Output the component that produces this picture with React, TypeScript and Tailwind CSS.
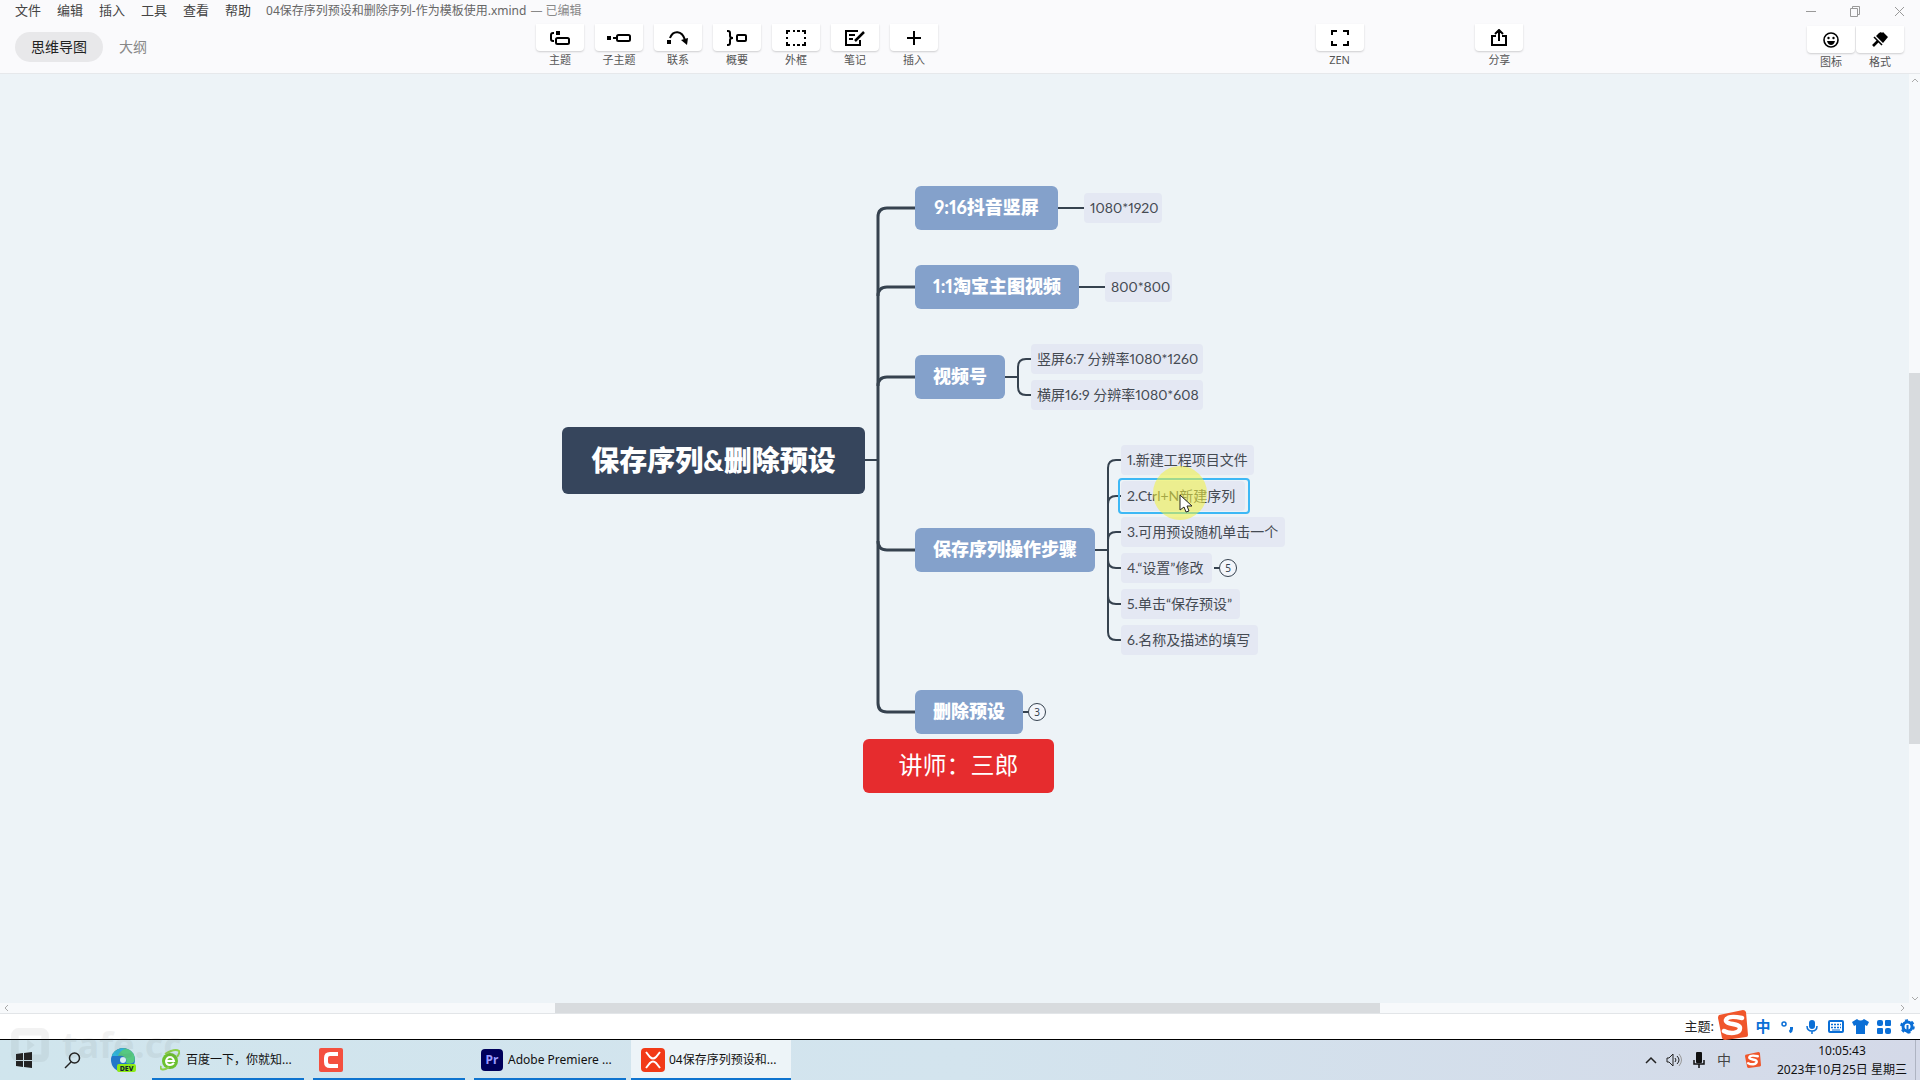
import { ReactNode } from "react";

type Tool = { label: string; icon: ReactNode };
type Node = { text: string; place: string };

const menus = ["文件", "编辑", "插入", "工具", "查看", "帮助"];

const tools: Tool[] = [
    {
        label: "主题",
        icon: (
            <svg width="22" height="16" viewBox="0 0 22 16" fill="none" stroke="#000" strokeWidth="2">
                <path d="M5 3H4Q2 3 2 5v4q0 2 2 2h1" />
                <rect x="7" y="1" width="4" height="4" fill="#000" stroke="none" />
                <rect x="7" y="8" width="13" height="6" rx="1.5" />
            </svg>
        ),
    },
    {
        label: "子主题",
        icon: (
            <svg width="24" height="16" viewBox="0 0 24 16" fill="none" stroke="#000" strokeWidth="2">
                <rect x="0" y="6" width="4" height="4" fill="#000" stroke="none" />
                <path d="M6 8h3" />
                <rect x="10" y="5" width="13" height="6" rx="1.5" />
            </svg>
        ),
    },
    {
        label: "联系",
        icon: (
            <svg width="22" height="16" viewBox="0 0 22 16" fill="none" stroke="#000" strokeWidth="2">
                <rect x="0" y="10" width="4" height="4" fill="#000" stroke="none" />
                <path d="M3 8C6 0 15 0 18 10" />
                <path d="M14 10l7-2-1 7z" fill="#000" stroke="none" />
            </svg>
        ),
    },
    {
        label: "概要",
        icon: (
            <svg width="22" height="16" viewBox="0 0 22 16" fill="none" stroke="#000" strokeWidth="2">
                <path d="M1 1h1q2 0 2 2v3q0 2 3 2q-3 0-3 2v3q0 2-2 2H1" />
                <rect x="11" y="5" width="9" height="6" rx="1" />
            </svg>
        ),
    },
    {
        label: "外框",
        icon: (
            <svg width="22" height="18" viewBox="0 0 22 18" fill="none" stroke="#000" strokeWidth="2">
                <path d="M2 5V2h3M17 2h3v3M20 13v3h-3M5 16H2v-3M8 2h2M12 2h3M8 16h2M12 16h3M2 8v2M20 8v2" />
            </svg>
        ),
    },
    {
        label: "笔记",
        icon: (
            <svg width="22" height="18" viewBox="0 0 22 18" fill="none" stroke="#000" strokeWidth="2">
                <path d="M14 2H2v14h14v-5" />
                <path d="M5 6h6M5 10h4" />
                <path d="M11 12l9-9" strokeWidth="2.5" />
            </svg>
        ),
    },
    {
        label: "插入",
        icon: (
            <svg width="16" height="16" viewBox="0 0 16 16" fill="none" stroke="#000" strokeWidth="2">
                <path d="M8 1v14M1 8h14" />
            </svg>
        ),
    },
];

const zen: Tool = {
    label: "ZEN",
    icon: (
        <svg width="20" height="18" viewBox="0 0 20 18" fill="none" stroke="#000" strokeWidth="2">
            <path d="M2 6V2h5M13 2h5v4M18 12v4h-5M7 16H2v-4" />
        </svg>
    ),
};

const share: Tool = {
    label: "分享",
    icon: (
        <svg width="18" height="18" viewBox="0 0 18 18" fill="none" stroke="#000" strokeWidth="2">
            <path d="M6 7H2v9h14V7h-4M9 12V2M5 5l4-4 4 4" />
        </svg>
    ),
};

const panels: Tool[] = [
    {
        label: "图标",
        icon: (
            <svg width="18" height="18" viewBox="0 0 18 18" fill="none" stroke="#000" strokeWidth="1.6">
                <circle cx="9" cy="9" r="7" />
                <circle cx="6.5" cy="7" r="1.2" fill="#000" stroke="none" />
                <circle cx="11.5" cy="7" r="1.2" fill="#000" stroke="none" />
                <path d="M5 10h8q-1 4-4 4t-4-4z" fill="#000" stroke="none" />
            </svg>
        ),
    },
    {
        label: "格式",
        icon: (
            <svg width="18" height="18" viewBox="0 0 18 18">
                <path d="M8 2l2-1 1 1 1-1 5 5-5 6-7-7z" />
                <path d="M3 6l8 8" stroke="#000" strokeWidth="1.6" />
                <path d="M7 10l-5 5" stroke="#000" strokeWidth="2.6" />
            </svg>
        ),
    },
];

const topics: Node[] = [
    { text: "9:16抖音竖屏", place: "left-[915px] top-[112px] w-[143px]" },
    { text: "1:1淘宝主图视频", place: "left-[915px] top-[191px] w-[164px]" },
    { text: "视频号", place: "left-[915px] top-[281px] w-[90px]" },
    { text: "保存序列操作步骤", place: "left-[915px] top-[454px] w-[180px]" },
    { text: "删除预设", place: "left-[915px] top-[616px] w-[108px]" },
];

const leaves: Node[] = [
    { text: "1080*1920", place: "left-[1084px] top-[119px] w-[78px]" },
    { text: "800*800", place: "left-[1105px] top-[198px] w-[67px]" },
    { text: "竖屏6:7 分辨率1080*1260", place: "left-[1031px] top-[270px] w-[172px]" },
    { text: "横屏16:9 分辨率1080*608", place: "left-[1031px] top-[306px] w-[172px]" },
    { text: "1.新建工程项目文件", place: "left-[1121px] top-[371px] w-[133px]" },
    { text: "2.Ctrl+N新建序列", place: "left-[1121px] top-[407px] w-[124px]" },
    { text: "3.可用预设随机单击一个", place: "left-[1121px] top-[443px] w-[164px]" },
    { text: "4.“设置”修改", place: "left-[1121px] top-[479px] w-[91px]" },
    { text: "5.单击“保存预设”", place: "left-[1121px] top-[515px] w-[119px]" },
    { text: "6.名称及描述的填写", place: "left-[1121px] top-[551px] w-[137px]" },
];

const folded: Node[] = [
    { text: "5", place: "left-[1219px] top-[485px]" },
    { text: "3", place: "left-[1028px] top-[629px]" },
];

function ToolButton({ label, icon }: Tool) {
    return (
        <button className="flex w-12 shrink-0 flex-col items-center gap-px">
            <span className="flex h-[27px] w-full items-center justify-center rounded-b-sm bg-white shadow-[0_1px_2px_rgba(0,0,0,0.18)]">
                {icon}
            </span>
            <span className="h-4 text-[11px] leading-4 whitespace-nowrap text-[#555]">{label}</span>
        </button>
    );
}

function Header() {
    return (
        <header className="flex h-[74px] shrink-0 flex-col border-b border-[#e6e8eb] bg-[#fafafc]">
            <div className="flex h-5 items-center pt-px pr-[15px] pl-[15px] text-[13px] text-[#444]">
                <nav className="flex gap-4">
                    {menus.map((m) => (
                        <button key={m}>{m}</button>
                    ))}
                </nav>
                <h1 className="ml-[15px] text-xs text-[#666]">04保存序列预设和删除序列-作为模板使用.xmind</h1>
                <span className="ml-1 text-xs text-[#888]">— 已编辑</span>
                <div className="ml-auto flex gap-8 text-[#999]">
                    <button aria-label="最小化">
                        <svg width="12" height="12" viewBox="0 0 12 12" stroke="currentColor">
                            <path d="M1 6.5h10" />
                        </svg>
                    </button>
                    <button aria-label="还原">
                        <svg width="12" height="12" viewBox="0 0 12 12" fill="none" stroke="currentColor">
                            <path d="M1.5 3.5h7v8h-7zM3.5 3.5v-2h7v8h-2" />
                        </svg>
                    </button>
                    <button aria-label="关闭">
                        <svg width="12" height="12" viewBox="0 0 12 12" stroke="currentColor">
                            <path d="M2 2l9 9M11 2l-9 9" />
                        </svg>
                    </button>
                </div>
            </div>
            <div className="flex items-start pt-1 pr-4">
                <div className="flex w-[536px] shrink-0 gap-4 pt-2 pl-[15px] text-sm">
                    <button className="h-[30px] w-[88px] rounded-full bg-[#e8e8ea] text-[#222]">思维导图</button>
                    <button className="text-[#888]">大纲</button>
                </div>
                <div className="flex gap-[11px]">
                    {tools.map((t) => (
                        <ToolButton key={t.label} {...t} />
                    ))}
                </div>
                <div className="grow-[378]" />
                <ToolButton {...zen} />
                <div className="grow-[112]" />
                <ToolButton {...share} />
                <div className="grow-[284]" />
                <div className="flex gap-px pt-[2px]">
                    {panels.map((t) => (
                        <ToolButton key={t.label} {...t} />
                    ))}
                </div>
            </div>
        </header>
    );
}

function Connectors() {
    return (
        <svg className="absolute top-0 left-0" width="1300" height="700" viewBox="0 0 1300 700" fill="none" stroke="#36424f">
            <g strokeWidth="3">
                <path d="M915 134H887Q878 134 878 143V629Q878 638 887 638H915" />
                <path d="M878 222Q878 213 887 213H915M878 312Q878 303 887 303H915M878 467Q878 476 887 476H915" />
            </g>
            <g strokeWidth="2">
                <path d="M865 386H878M1058 134H1084M1079 213H1105" />
                <path d="M1005 303H1018M1031 285H1026Q1018 285 1018 293V313Q1018 321 1026 321H1031" />
                <path d="M1095 476H1108M1121 386H1116Q1108 386 1108 394V558Q1108 566 1116 566H1121" />
                <path d="M1108 430Q1108 422 1116 422H1121M1108 466Q1108 458 1116 458H1121" />
                <path d="M1108 486Q1108 494 1116 494H1121M1108 522Q1108 530 1116 530H1121" />
                <path d="M1214 494H1220M1023 638H1029" />
            </g>
        </svg>
    );
}

function MindMap() {
    return (
        <main className="relative min-w-0 flex-1 overflow-hidden bg-[#edf3f7]">
            <Connectors />
            <div className="absolute top-[353px] left-[562px] flex h-[67px] w-[303px] items-center justify-center rounded-md bg-[#36455c] pb-[2px] font-['Lato','Noto_Sans_CJK_SC',sans-serif] text-[28px] font-black whitespace-nowrap text-white">
                保存序列&amp;删除预设
            </div>
            {topics.map((n) => (
                <div
                    key={n.text}
                    className={`absolute flex h-11 items-center justify-center rounded-md bg-[#84a1cb] pb-[2px] font-['Lato','Noto_Sans_CJK_SC',sans-serif] text-lg font-black whitespace-nowrap text-white proportional-nums ${n.place}`}
                >
                    {n.text}
                </div>
            ))}
            {leaves.map((n) => (
                <div
                    key={n.text}
                    className={`absolute flex h-[30px] items-center rounded-sm bg-[#e4e8f3] pl-[6px] font-['Lato','Noto_Sans_CJK_SC',sans-serif] text-sm whitespace-nowrap text-[#444a52] proportional-nums ${n.place}`}
                >
                    {n.text}
                </div>
            ))}
            {folded.map((n) => (
                <button
                    key={n.text}
                    className={`absolute flex size-[18px] items-center justify-center rounded-full border border-[#36424f] bg-[#f3f6fb] text-[10px] leading-none text-[#36424f] ${n.place}`}
                >
                    {n.text}
                </button>
            ))}
            <div className="absolute top-[404px] left-[1118px] h-9 w-[132px] rounded-sm border-2 border-[#3db8f5]" />
            <div className="absolute top-[665px] left-[863px] flex h-[54px] w-[191px] items-center justify-center rounded-md bg-[#e62c2e] pb-[2px] text-2xl whitespace-nowrap text-white">
                讲师：三郎
            </div>
            <div className="absolute top-[392px] left-[1153px] size-[54px] rounded-full bg-[#f2f23c]/55" />
            <svg className="absolute top-[420px] left-[1179px]" width="14" height="20" viewBox="0 0 14 20">
                <path d="M1 1v15l4-3 2 5 3-1-2-5h5z" fill="#fff" stroke="#222" />
            </svg>
        </main>
    );
}

function Chevron({ d }: { d: string }) {
    return (
        <svg className="shrink-0" width="10" height="10" viewBox="0 0 10 10" fill="none" stroke="#aaa">
            <path d={d} />
        </svg>
    );
}

function SogouLogo({ size }: { size: number }) {
    return (
        <svg className="shrink-0" width={size} height={size} viewBox="0 0 30 30" fill="none">
            <path d="M1 5L25 0q2 0 3 2l2 23q0 2-2 2L7 30q-2 0-3-2L0 8q0-2 1-3z" fill="#f0562b" />
            <path
                d="M24 8Q10 5 8 10c-1 5 14 3 14 8 0 6-11 6-16 3"
                stroke="#fff"
                strokeWidth="4.5"
                strokeLinecap="round"
            />
        </svg>
    );
}

function StatusBar() {
    return (
        <div className="flex h-[26px] shrink-0 items-center border-b border-black bg-white pr-[5px] text-[#222]">
            <span className="ml-auto text-[13px]">主题:</span>
            <div className="ml-1 flex items-center text-[#0b6fd6]">
                <span className="-mt-[3px]">
                    <SogouLogo size={30} />
                </span>
                <button className="ml-[7px] w-4 text-[15px] font-bold">中</button>
                <svg className="ml-[10px]" width="14" height="14" viewBox="0 0 14 14" fill="none" stroke="currentColor">
                    <circle cx="3" cy="4" r="2" strokeWidth="1.5" />
                    <path d="M10.5 7v2q0 2-2 3" strokeWidth="3" />
                </svg>
                <svg className="ml-[10px]" width="14" height="16" viewBox="0 0 14 16" fill="none" stroke="currentColor">
                    <rect x="4" y="1" width="6" height="9" rx="3" fill="currentColor" stroke="none" />
                    <path d="M2 7q0 5 5 5t5-5M7 12v3" strokeWidth="1.5" />
                </svg>
                <svg className="ml-[9px]" width="16" height="13" viewBox="0 0 16 13" fill="none" stroke="currentColor">
                    <rect x="1" y="1" width="14" height="11" rx="1" strokeWidth="2" />
                    <path d="M3 4.5h10M3 7.5h10" strokeWidth="1.5" strokeDasharray="2 1" />
                    <path d="M4 10h8" />
                </svg>
                <svg className="ml-2" width="17" height="15" viewBox="0 0 17 15" fill="currentColor">
                    <path d="M5 0q3.5 3 7 0l5 3-2 4-2-1v9H4V6L2 7 0 3z" />
                </svg>
                <svg className="ml-[8px]" width="14" height="14" viewBox="0 0 14 14" fill="currentColor">
                    <rect width="6" height="6" rx="2" />
                    <rect x="8" width="6" height="6" rx="1" />
                    <rect y="8" width="6" height="6" rx="1" />
                    <rect x="8" y="8" width="6" height="6" rx="2" />
                </svg>
                <svg className="ml-[9px]" width="15" height="15" viewBox="0 0 15 15" fill="none" stroke="currentColor">
                    <circle cx="7.5" cy="7.5" r="4.5" strokeWidth="3" />
                    <circle cx="7.5" cy="7.5" r="6.3" strokeWidth="2" strokeDasharray="3 3.6" />
                    <path d="M7.5 6v8" strokeWidth="2" />
                </svg>
            </div>
        </div>
    );
}

function EdgeIcon() {
    return (
        <svg width="25" height="25" viewBox="0 0 25 25">
            <circle cx="12" cy="12" r="12" fill="#2377c9" />
            <path d="M1 8C4-1 18-3 23 7c3 8-3 10-8 8 2-6-4-8-8-7z" fill="#56c981" />
            <path d="M1 8C4 1 11-1 15 1c-6 1-7 5-8 7z" fill="#2fb3dd" />
            <circle cx="12" cy="12" r="3" fill="#d7ecf4" />
            <rect x="6" y="16" width="19" height="8" rx="2" fill="#8eea16" />
            <text x="15.5" y="23" textAnchor="middle" fontSize="7" fontWeight="800" fill="#123">
                DEV
            </text>
        </svg>
    );
}

function BrowserIcon() {
    return (
        <svg className="shrink-0" width="20" height="22" viewBox="0 0 20 22" fill="none">
            <circle cx="10" cy="12" r="8" fill="#6cc12f" />
            <path d="M6 12h8q-1-4-4-4t-4 4q0 4 4 4 2 0 4-2" stroke="#fff" strokeWidth="2" />
            <path d="M1 17C-1 21 4 22 9 18M5 5q10-6 14-3 1 2-2 6" stroke="#8fd14a" strokeWidth="2" />
        </svg>
    );
}

function CamtasiaIcon() {
    return (
        <svg width="24" height="24" viewBox="0 0 24 24" fill="none">
            <rect width="24" height="24" rx="2" fill="#f4503f" />
            <path d="M19 6h-8Q7 6 7 10v4q0 4 4 4h8" stroke="#fff" strokeWidth="4" />
        </svg>
    );
}

function PremiereIcon() {
    return (
        <svg className="shrink-0" width="22" height="22" viewBox="0 0 22 22">
            <rect width="22" height="22" rx="4" fill="#00005b" />
            <text x="11" y="15" textAnchor="middle" fontSize="12" fontWeight="700" fill="#9999ff">
                Pr
            </text>
        </svg>
    );
}

function XmindIcon() {
    return (
        <svg className="shrink-0" width="24" height="24" viewBox="0 0 24 24" fill="none">
            <rect width="24" height="24" rx="4" fill="#f23a17" />
            <path d="M5 4l4 5q3 3 6 0l4-5M5 20l4-5q3-3 6 0l4 5" stroke="#fff" strokeWidth="2" />
        </svg>
    );
}

function Taskbar() {
    return (
        <footer className="relative flex h-10 shrink-0 items-stretch bg-linear-to-r from-[#d0e5ed] via-[#d3e4ee] to-[#d4d9e8] pl-4 text-xs text-[#111]">
            <div className="absolute bottom-[18px] left-[10px] flex items-center gap-3 text-[#555] opacity-[0.07]">
                <svg width="40" height="34" viewBox="0 0 40 36" fill="none" stroke="currentColor" strokeWidth="8">
                    <rect x="4" y="4" width="32" height="28" rx="4" />
                    <path d="M17 12v12l8-6z" fill="currentColor" stroke="none" />
                </svg>
                <span className="text-4xl leading-7 font-bold">tafe.cc</span>
            </div>
            <button aria-label="开始" className="flex items-center">
                <svg width="16" height="16" viewBox="0 0 16 16" fill="#222">
                    <path d="M0 2l7-1v7H0zM8 1l8-1v8H8zM0 9h7v6l-7-1zM8 9h8v7l-8-1z" />
                </svg>
            </button>
            <button aria-label="搜索" className="ml-8 flex items-center">
                <svg width="17" height="17" viewBox="0 0 17 17" fill="none" stroke="#222" strokeWidth="1.5">
                    <circle cx="10.5" cy="6" r="5" />
                    <path d="M7 10l-6 6" />
                </svg>
            </button>
            <button aria-label="Edge Dev" className="ml-[30px] flex items-center">
                <EdgeIcon />
            </button>
            <button className="ml-4 flex w-[152px] items-center gap-[6px] border-b-2 border-[#0f74cf] pt-[2px] pl-2 whitespace-nowrap">
                <BrowserIcon />
                百度一下，你就知...
            </button>
            <button aria-label="Camtasia" className="ml-[9px] flex w-[152px] items-center border-b-2 border-[#0f74cf] pt-[2px] pl-[6px]">
                <CamtasiaIcon />
            </button>
            <button className="ml-[9px] flex w-[152px] items-center gap-[5px] border-b-2 border-[#0f74cf] pt-[2px] pl-[7px] whitespace-nowrap">
                <PremiereIcon />
                Adobe Premiere ...
            </button>
            <button className="ml-[5px] flex w-40 items-center gap-1 border-b-2 border-[#0f74cf] bg-[#edf4f8] pt-[2px] pl-[10px] whitespace-nowrap">
                <XmindIcon />
                04保存序列预设和...
            </button>
            <div className="ml-auto flex items-center">
                <svg width="12" height="8" viewBox="0 0 12 8" fill="none" stroke="#222" strokeWidth="1.5">
                    <path d="M1 7l5-5 5 5" />
                </svg>
                <svg className="ml-[9px]" width="17" height="14" viewBox="0 0 17 14" fill="none" stroke="#222">
                    <path d="M1 5h2l4-4v12L3 9H1z" />
                    <path d="M9 5q2 2 0 4M11 3q4 4 0 8" />
                    <path d="M13 1q5 6 0 12" stroke="#999" />
                </svg>
                <svg className="ml-[10px]" width="12" height="16" viewBox="0 0 12 16" fill="none" stroke="#111">
                    <rect x="3" width="6" height="11" rx="1" fill="#111" stroke="none" />
                    <path d="M1 8v4h10V8M6 12v4" strokeWidth="1.5" />
                </svg>
                <span className="ml-3 w-[14px] text-sm text-[#444]">中</span>
                <span className="ml-[14px] flex">
                    <SogouLogo size={16} />
                </span>
                <div className="ml-4 text-center leading-[19px] whitespace-nowrap">
                    <div>10:05:43</div>
                    <div>2023年10月25日 星期三</div>
                </div>
                <div className="mr-1 ml-2 h-10 w-px bg-[#aeb4c2]" />
            </div>
        </footer>
    );
}

export default function App() {
    return (
        <div className="flex h-screen w-full flex-col overflow-hidden font-['Noto_Sans','Noto_Sans_CJK_SC',sans-serif]">
            <Header />
            <div className="flex min-h-0 flex-1">
                <div className="flex min-w-0 flex-1 flex-col">
                    <MindMap />
                    <div className="flex h-[10px] shrink-0 items-center bg-[#f7f9fb] px-[2px]">
                        <Chevron d="M6 2L3 5l3 3" />
                        <div className="grow-[543]" />
                        <div className="h-full grow-[825] bg-[#d8dbde]" />
                        <div className="grow-[517]" />
                        <Chevron d="M4 2l3 3-3 3" />
                    </div>
                </div>
                <div className="flex w-[11px] shrink-0 flex-col items-center bg-[#f7f9fb] pt-[2px] pb-[10px]">
                    <Chevron d="M2 6l3-3 3 3" />
                    <div className="grow-[287]" />
                    <div className="w-full grow-[371] bg-[#d8dbde]" />
                    <div className="grow-[249]" />
                    <Chevron d="M2 4l3 3 3-3" />
                </div>
            </div>
            <div className="h-px shrink-0 bg-[#e2e5e8]" />
            <StatusBar />
            <Taskbar />
        </div>
    );
}
